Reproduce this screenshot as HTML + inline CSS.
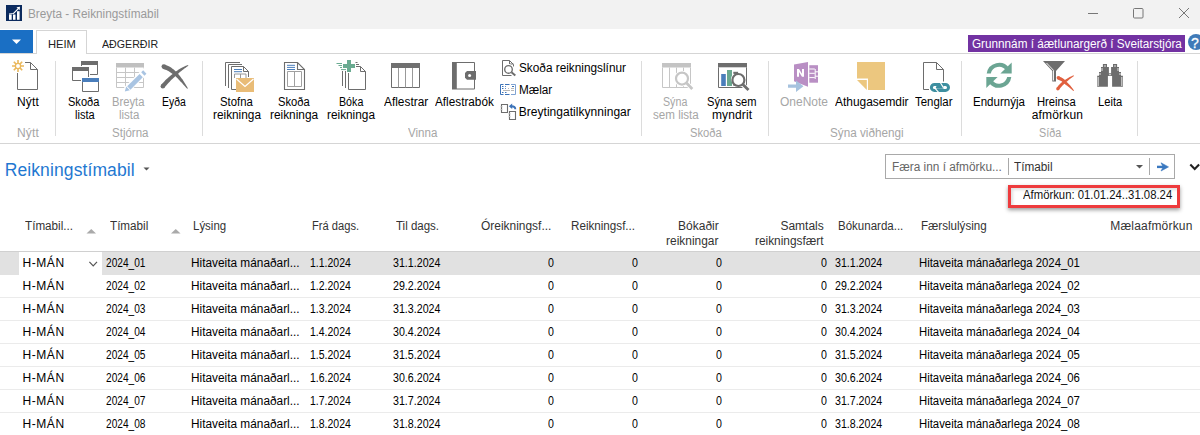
<!DOCTYPE html>
<html><head><meta charset="utf-8"><style>
html,body{margin:0;padding:0;width:1200px;height:435px;overflow:hidden;background:#fff;font-family:"Liberation Sans", sans-serif;}
.t{position:absolute;white-space:nowrap;line-height:14px;}
</style></head><body>
<div style="position:absolute;left:0;top:0;width:1200px;height:29px;background:#f2f2f2"></div>
<div style="position:absolute;left:0;top:30px;width:33px;height:23px;background:#1a6fc4"></div>
<div style="position:absolute;left:36px;top:30px;width:51px;height:24px;border:1px solid #d5d5d5;border-bottom:none;background:#fff;box-sizing:border-box"></div>
<div style="position:absolute;left:0;top:53px;width:36px;height:1px;background:#d5d5d5"></div>
<div style="position:absolute;left:87px;top:53px;width:1113px;height:1px;background:#d5d5d5"></div>
<div style="position:absolute;left:968px;top:35px;width:217px;height:17px;background:#7232a2"></div>
<div style="position:absolute;left:1188px;top:34px;width:16px;height:16px;border-radius:50%;background:#3f7ab8"></div>
<div style="position:absolute;left:0;top:143px;width:1200px;height:1px;background:#d5d5d5"></div>
<div style="position:absolute;left:55px;top:61px;width:1px;height:75px;background:#dcdcdc"></div><div style="position:absolute;left:202px;top:61px;width:1px;height:75px;background:#dcdcdc"></div><div style="position:absolute;left:641px;top:61px;width:1px;height:75px;background:#dcdcdc"></div><div style="position:absolute;left:768px;top:61px;width:1px;height:75px;background:#dcdcdc"></div><div style="position:absolute;left:961px;top:61px;width:1px;height:75px;background:#dcdcdc"></div><div style="position:absolute;left:1137px;top:61px;width:1px;height:75px;background:#dcdcdc"></div>
<div style="position:absolute;left:0;top:251px;width:1200px;height:1px;background:#d0d0d0"></div><div style="position:absolute;left:0;top:274px;width:1200px;height:1px;background:#ebebeb"></div><div style="position:absolute;left:0;top:297px;width:1200px;height:1px;background:#ebebeb"></div><div style="position:absolute;left:0;top:320px;width:1200px;height:1px;background:#ebebeb"></div><div style="position:absolute;left:0;top:343px;width:1200px;height:1px;background:#ebebeb"></div><div style="position:absolute;left:0;top:366px;width:1200px;height:1px;background:#ebebeb"></div><div style="position:absolute;left:0;top:389px;width:1200px;height:1px;background:#ebebeb"></div><div style="position:absolute;left:0;top:412px;width:1200px;height:1px;background:#ebebeb"></div>
<div style="position:absolute;left:0;top:252px;width:1200px;height:23px;background:#e1e1e1"></div>
<div style="position:absolute;left:19px;top:252px;width:83px;height:23px;background:#fff"></div>
<div style="position:absolute;left:885px;top:154px;width:290px;height:25px;border:1px solid #a9a9a9;box-sizing:border-box;background:#fff"></div>
<div style="position:absolute;left:1008px;top:158px;width:1px;height:17px;background:#a9a9a9"></div>
<div style="position:absolute;left:1149px;top:158px;width:1px;height:17px;background:#a9a9a9"></div>
<div style="position:absolute;left:1008px;top:185px;width:172px;height:23px;border:3px solid #ee3b3d;box-sizing:border-box;box-shadow:0px 2px 4px rgba(0,0,0,.4), inset 2px 2px 3px rgba(0,0,0,.12)"></div>
<div class="t" style="left:27.75px;top:7.34px;font-size:12px;color:#9a9a9a;transform:scaleX(0.9814);transform-origin:0 0;">Breyta - Reikningstímabil</div>
<div class="t" style="left:47.50px;top:37.38px;font-size:11.3px;color:#222;transform:scaleX(0.9881);transform-origin:0 0;">HEIM</div>
<div class="t" style="left:102.00px;top:37.38px;font-size:11.3px;color:#222;transform:scaleX(0.9416);transform-origin:0 0;">AÐGERÐIR</div>
<div class="t" style="left:971.50px;top:36.84px;font-size:12px;color:#fff;transform:scaleX(0.9772);transform-origin:0 0;">Grunnnám í áætlunargerð í Sveitarstjóra</div>
<div class="t" style="left:17.00px;top:94.84px;font-size:12px;color:#000;letter-spacing:0.167px;">Nýtt</div>
<div class="t" style="left:68.40px;top:94.84px;font-size:12px;color:#000;transform:scaleX(0.9199);transform-origin:0 0;">Skoða</div>
<div class="t" style="left:74.80px;top:108.34px;font-size:12px;color:#000;transform:scaleX(0.9231);transform-origin:0 0;">lista</div>
<div class="t" style="left:112.00px;top:94.84px;font-size:12px;color:#a6a6a6;transform:scaleX(0.9341);transform-origin:0 0;">Breyta</div>
<div class="t" style="left:118.50px;top:108.34px;font-size:12px;color:#a6a6a6;transform:scaleX(0.9554);transform-origin:0 0;">lista</div>
<div class="t" style="left:162.00px;top:94.84px;font-size:12px;color:#000;transform:scaleX(0.8671);transform-origin:0 0;">Eyða</div>
<div class="t" style="left:220.20px;top:94.84px;font-size:12px;color:#000;transform:scaleX(0.9452);transform-origin:0 0;">Stofna</div>
<div class="t" style="left:213.30px;top:108.34px;font-size:12px;color:#000;transform:scaleX(0.9852);transform-origin:0 0;">reikninga</div>
<div class="t" style="left:277.70px;top:94.84px;font-size:12px;color:#000;transform:scaleX(0.9315);transform-origin:0 0;">Skoða</div>
<div class="t" style="left:270.00px;top:108.34px;font-size:12px;color:#000;transform:scaleX(0.9873);transform-origin:0 0;">reikninga</div>
<div class="t" style="left:338.70px;top:94.84px;font-size:12px;color:#000;transform:scaleX(0.8888);transform-origin:0 0;">Bóka</div>
<div class="t" style="left:327.00px;top:108.34px;font-size:12px;color:#000;transform:scaleX(0.9852);transform-origin:0 0;">reikninga</div>
<div class="t" style="left:384.00px;top:94.84px;font-size:12px;color:#000;transform:scaleX(0.9892);transform-origin:0 0;">Aflestrar</div>
<div class="t" style="left:434.70px;top:94.84px;font-size:12px;color:#000;transform:scaleX(0.9799);transform-origin:0 0;">Aflestrabók</div>
<div class="t" style="left:662.50px;top:94.84px;font-size:12px;color:#a6a6a6;transform:scaleX(0.8888);transform-origin:0 0;">Sýna</div>
<div class="t" style="left:652.60px;top:108.34px;font-size:12px;color:#a6a6a6;transform:scaleX(0.9671);transform-origin:0 0;">sem lista</div>
<div class="t" style="left:706.70px;top:94.84px;font-size:12px;color:#000;transform:scaleX(0.9277);transform-origin:0 0;">Sýna sem</div>
<div class="t" style="left:712.00px;top:108.34px;font-size:12px;color:#000;letter-spacing:0.116px;">myndrit</div>
<div class="t" style="left:779.70px;top:94.84px;font-size:12px;color:#a6a6a6;transform:scaleX(0.9989);transform-origin:0 0;">OneNote</div>
<div class="t" style="left:835.00px;top:94.84px;font-size:12px;color:#000;transform:scaleX(0.9940);transform-origin:0 0;">Athugasemdir</div>
<div class="t" style="left:915.30px;top:94.84px;font-size:12px;color:#000;transform:scaleX(0.9527);transform-origin:0 0;">Tenglar</div>
<div class="t" style="left:973.30px;top:94.84px;font-size:12px;color:#000;transform:scaleX(0.9602);transform-origin:0 0;">Endurnýja</div>
<div class="t" style="left:1037.00px;top:94.84px;font-size:12px;color:#000;transform:scaleX(0.9358);transform-origin:0 0;">Hreinsa</div>
<div class="t" style="left:1031.70px;top:108.34px;font-size:12px;color:#000;letter-spacing:0.179px;">afmörkun</div>
<div class="t" style="left:1097.50px;top:94.84px;font-size:12px;color:#000;transform:scaleX(0.9299);transform-origin:0 0;">Leita</div>
<div class="t" style="left:17.00px;top:125.84px;font-size:12px;color:#a6a6a6;letter-spacing:0.167px;">Nýtt</div>
<div class="t" style="left:111.60px;top:125.84px;font-size:12px;color:#a6a6a6;transform:scaleX(0.9596);transform-origin:0 0;">Stjórna</div>
<div class="t" style="left:408.00px;top:125.84px;font-size:12px;color:#a6a6a6;transform:scaleX(0.9643);transform-origin:0 0;">Vinna</div>
<div class="t" style="left:690.00px;top:125.84px;font-size:12px;color:#a6a6a6;transform:scaleX(0.9315);transform-origin:0 0;">Skoða</div>
<div class="t" style="left:830.00px;top:125.84px;font-size:12px;color:#a6a6a6;transform:scaleX(0.9756);transform-origin:0 0;">Sýna viðhengi</div>
<div class="t" style="left:1039.30px;top:125.84px;font-size:12px;color:#a6a6a6;transform:scaleX(0.8996);transform-origin:0 0;">Síða</div>
<div class="t" style="left:518.75px;top:61.14px;font-size:12px;color:#000;transform:scaleX(0.9836);transform-origin:0 0;">Skoða reikningslínur</div>
<div class="t" style="left:518.75px;top:83.04px;font-size:12px;color:#000;transform:scaleX(0.9778);transform-origin:0 0;">Mælar</div>
<div class="t" style="left:518.75px;top:105.14px;font-size:12px;color:#000;letter-spacing:0.033px;">Breytingatilkynningar</div>
<div class="t" style="left:4.70px;top:162.94px;font-size:17.5px;color:#1f78d1;letter-spacing:0.107px;-webkit-text-stroke:0;">Reikningstímabil</div>
<div class="t" style="left:892.00px;top:159.84px;font-size:12px;color:#666;transform:scaleX(0.9862);transform-origin:0 0;">Færa inn í afmörku...</div>
<div class="t" style="left:1014.40px;top:159.84px;font-size:12px;color:#333;transform:scaleX(0.9800);transform-origin:0 0;">Tímabil</div>
<div class="t" style="left:1023.00px;top:188.04px;font-size:12px;color:#111;transform:scaleX(0.9436);transform-origin:0 0;">Afmörkun: 01.01.24..31.08.24</div>
<div class="t" style="left:25.30px;top:219.34px;font-size:12px;color:#333;transform:scaleX(0.9733);transform-origin:0 0;">Tímabil...</div>
<div class="t" style="left:110.00px;top:219.34px;font-size:12px;color:#333;transform:scaleX(0.9722);transform-origin:0 0;">Tímabil</div>
<div class="t" style="left:193.00px;top:219.34px;font-size:12px;color:#333;transform:scaleX(0.9555);transform-origin:0 0;">Lýsing</div>
<div class="t" style="left:312.00px;top:219.34px;font-size:12px;color:#333;transform:scaleX(0.9284);transform-origin:0 0;">Frá dags.</div>
<div class="t" style="left:396.00px;top:219.34px;font-size:12px;color:#333;transform:scaleX(0.9591);transform-origin:0 0;">Til dags.</div>
<div class="t" style="left:481.25px;top:219.34px;font-size:12px;color:#333;transform:scaleX(0.9949);transform-origin:0 0;">Óreikningsf...</div>
<div class="t" style="left:571.25px;top:219.34px;font-size:12px;color:#333;transform:scaleX(0.9704);transform-origin:0 0;">Reikningsf...</div>
<div class="t" style="left:666.25px;top:233.84px;font-size:12px;color:#333;transform:scaleX(0.9963);transform-origin:0 0;">reikningar</div>
<div class="t" style="left:754.50px;top:233.84px;font-size:12px;color:#333;transform:scaleX(0.9890);transform-origin:0 0;">reikningsfært</div>
<div class="t" style="left:837.50px;top:219.34px;font-size:12px;color:#333;transform:scaleX(0.9600);transform-origin:0 0;">Bókunarda...</div>
<div class="t" style="left:921.25px;top:219.34px;font-size:12px;color:#333;transform:scaleX(0.9652);transform-origin:0 0;">Færslulýsing</div>
<div class="t" style="left:1110.30px;top:219.34px;font-size:12px;color:#333;letter-spacing:0.186px;">Mælaafmörkun</div>
<div class="t" style="left:678.06px;top:219.34px;font-size:12px;color:#333;">Bókaðir</div>
<div class="t" style="left:780.40px;top:219.34px;font-size:12px;color:#333;">Samtals</div>
<div class="t" style="left:22.40px;top:255.84px;font-size:12px;color:#000;letter-spacing:0.584px;">H-MÁN</div>
<div class="t" style="left:106.25px;top:255.84px;font-size:12px;color:#000;transform:scaleX(0.8450);transform-origin:0 0;">2024_01</div>
<div class="t" style="left:190.50px;top:255.84px;font-size:12px;color:#000;transform:scaleX(0.9866);transform-origin:0 0;">Hitaveita mánaðarl...</div>
<div class="t" style="left:309.70px;top:255.84px;font-size:12px;color:#000;transform:scaleX(0.8738);transform-origin:0 0;">1.1.2024</div>
<div class="t" style="left:393.00px;top:255.84px;font-size:12px;color:#000;transform:scaleX(0.8890);transform-origin:0 0;">31.1.2024</div>
<div class="t" style="left:548.00px;top:255.84px;font-size:12px;color:#000;transform:scaleX(0.8857);transform-origin:0 0;">0</div>
<div class="t" style="left:632.20px;top:255.84px;font-size:12px;color:#000;transform:scaleX(0.8857);transform-origin:0 0;">0</div>
<div class="t" style="left:716.00px;top:255.84px;font-size:12px;color:#000;transform:scaleX(0.8857);transform-origin:0 0;">0</div>
<div class="t" style="left:821.20px;top:255.84px;font-size:12px;color:#000;transform:scaleX(0.8857);transform-origin:0 0;">0</div>
<div class="t" style="left:834.50px;top:255.84px;font-size:12px;color:#000;transform:scaleX(0.8844);transform-origin:0 0;">31.1.2024</div>
<div class="t" style="left:918.75px;top:255.84px;font-size:12px;color:#000;transform:scaleX(0.9460);transform-origin:0 0;">Hitaveita mánaðarlega 2024_01</div>
<div class="t" style="left:22.40px;top:278.84px;font-size:12px;color:#000;letter-spacing:0.584px;">H-MÁN</div>
<div class="t" style="left:106.25px;top:278.84px;font-size:12px;color:#000;transform:scaleX(0.8450);transform-origin:0 0;">2024_02</div>
<div class="t" style="left:190.50px;top:278.84px;font-size:12px;color:#000;transform:scaleX(0.9866);transform-origin:0 0;">Hitaveita mánaðarl...</div>
<div class="t" style="left:309.70px;top:278.84px;font-size:12px;color:#000;transform:scaleX(0.8738);transform-origin:0 0;">1.2.2024</div>
<div class="t" style="left:393.00px;top:278.84px;font-size:12px;color:#000;transform:scaleX(0.8890);transform-origin:0 0;">29.2.2024</div>
<div class="t" style="left:548.00px;top:278.84px;font-size:12px;color:#000;transform:scaleX(0.8857);transform-origin:0 0;">0</div>
<div class="t" style="left:632.20px;top:278.84px;font-size:12px;color:#000;transform:scaleX(0.8857);transform-origin:0 0;">0</div>
<div class="t" style="left:716.00px;top:278.84px;font-size:12px;color:#000;transform:scaleX(0.8857);transform-origin:0 0;">0</div>
<div class="t" style="left:821.20px;top:278.84px;font-size:12px;color:#000;transform:scaleX(0.8857);transform-origin:0 0;">0</div>
<div class="t" style="left:834.50px;top:278.84px;font-size:12px;color:#000;transform:scaleX(0.8844);transform-origin:0 0;">29.2.2024</div>
<div class="t" style="left:918.75px;top:278.84px;font-size:12px;color:#000;transform:scaleX(0.9460);transform-origin:0 0;">Hitaveita mánaðarlega 2024_02</div>
<div class="t" style="left:22.40px;top:301.84px;font-size:12px;color:#000;letter-spacing:0.584px;">H-MÁN</div>
<div class="t" style="left:106.25px;top:301.84px;font-size:12px;color:#000;transform:scaleX(0.8450);transform-origin:0 0;">2024_03</div>
<div class="t" style="left:190.50px;top:301.84px;font-size:12px;color:#000;transform:scaleX(0.9866);transform-origin:0 0;">Hitaveita mánaðarl...</div>
<div class="t" style="left:309.70px;top:301.84px;font-size:12px;color:#000;transform:scaleX(0.8738);transform-origin:0 0;">1.3.2024</div>
<div class="t" style="left:393.00px;top:301.84px;font-size:12px;color:#000;transform:scaleX(0.8890);transform-origin:0 0;">31.3.2024</div>
<div class="t" style="left:548.00px;top:301.84px;font-size:12px;color:#000;transform:scaleX(0.8857);transform-origin:0 0;">0</div>
<div class="t" style="left:632.20px;top:301.84px;font-size:12px;color:#000;transform:scaleX(0.8857);transform-origin:0 0;">0</div>
<div class="t" style="left:716.00px;top:301.84px;font-size:12px;color:#000;transform:scaleX(0.8857);transform-origin:0 0;">0</div>
<div class="t" style="left:821.20px;top:301.84px;font-size:12px;color:#000;transform:scaleX(0.8857);transform-origin:0 0;">0</div>
<div class="t" style="left:834.50px;top:301.84px;font-size:12px;color:#000;transform:scaleX(0.8844);transform-origin:0 0;">31.3.2024</div>
<div class="t" style="left:918.75px;top:301.84px;font-size:12px;color:#000;transform:scaleX(0.9460);transform-origin:0 0;">Hitaveita mánaðarlega 2024_03</div>
<div class="t" style="left:22.40px;top:324.84px;font-size:12px;color:#000;letter-spacing:0.584px;">H-MÁN</div>
<div class="t" style="left:106.25px;top:324.84px;font-size:12px;color:#000;transform:scaleX(0.8450);transform-origin:0 0;">2024_04</div>
<div class="t" style="left:190.50px;top:324.84px;font-size:12px;color:#000;transform:scaleX(0.9866);transform-origin:0 0;">Hitaveita mánaðarl...</div>
<div class="t" style="left:309.70px;top:324.84px;font-size:12px;color:#000;transform:scaleX(0.8738);transform-origin:0 0;">1.4.2024</div>
<div class="t" style="left:393.00px;top:324.84px;font-size:12px;color:#000;transform:scaleX(0.8890);transform-origin:0 0;">30.4.2024</div>
<div class="t" style="left:548.00px;top:324.84px;font-size:12px;color:#000;transform:scaleX(0.8857);transform-origin:0 0;">0</div>
<div class="t" style="left:632.20px;top:324.84px;font-size:12px;color:#000;transform:scaleX(0.8857);transform-origin:0 0;">0</div>
<div class="t" style="left:716.00px;top:324.84px;font-size:12px;color:#000;transform:scaleX(0.8857);transform-origin:0 0;">0</div>
<div class="t" style="left:821.20px;top:324.84px;font-size:12px;color:#000;transform:scaleX(0.8857);transform-origin:0 0;">0</div>
<div class="t" style="left:834.50px;top:324.84px;font-size:12px;color:#000;transform:scaleX(0.8844);transform-origin:0 0;">30.4.2024</div>
<div class="t" style="left:918.75px;top:324.84px;font-size:12px;color:#000;transform:scaleX(0.9460);transform-origin:0 0;">Hitaveita mánaðarlega 2024_04</div>
<div class="t" style="left:22.40px;top:347.84px;font-size:12px;color:#000;letter-spacing:0.584px;">H-MÁN</div>
<div class="t" style="left:106.25px;top:347.84px;font-size:12px;color:#000;transform:scaleX(0.8450);transform-origin:0 0;">2024_05</div>
<div class="t" style="left:190.50px;top:347.84px;font-size:12px;color:#000;transform:scaleX(0.9866);transform-origin:0 0;">Hitaveita mánaðarl...</div>
<div class="t" style="left:309.70px;top:347.84px;font-size:12px;color:#000;transform:scaleX(0.8738);transform-origin:0 0;">1.5.2024</div>
<div class="t" style="left:393.00px;top:347.84px;font-size:12px;color:#000;transform:scaleX(0.8890);transform-origin:0 0;">31.5.2024</div>
<div class="t" style="left:548.00px;top:347.84px;font-size:12px;color:#000;transform:scaleX(0.8857);transform-origin:0 0;">0</div>
<div class="t" style="left:632.20px;top:347.84px;font-size:12px;color:#000;transform:scaleX(0.8857);transform-origin:0 0;">0</div>
<div class="t" style="left:716.00px;top:347.84px;font-size:12px;color:#000;transform:scaleX(0.8857);transform-origin:0 0;">0</div>
<div class="t" style="left:821.20px;top:347.84px;font-size:12px;color:#000;transform:scaleX(0.8857);transform-origin:0 0;">0</div>
<div class="t" style="left:834.50px;top:347.84px;font-size:12px;color:#000;transform:scaleX(0.8844);transform-origin:0 0;">31.5.2024</div>
<div class="t" style="left:918.75px;top:347.84px;font-size:12px;color:#000;transform:scaleX(0.9460);transform-origin:0 0;">Hitaveita mánaðarlega 2024_05</div>
<div class="t" style="left:22.40px;top:370.84px;font-size:12px;color:#000;letter-spacing:0.584px;">H-MÁN</div>
<div class="t" style="left:106.25px;top:370.84px;font-size:12px;color:#000;transform:scaleX(0.8450);transform-origin:0 0;">2024_06</div>
<div class="t" style="left:190.50px;top:370.84px;font-size:12px;color:#000;transform:scaleX(0.9866);transform-origin:0 0;">Hitaveita mánaðarl...</div>
<div class="t" style="left:309.70px;top:370.84px;font-size:12px;color:#000;transform:scaleX(0.8738);transform-origin:0 0;">1.6.2024</div>
<div class="t" style="left:393.00px;top:370.84px;font-size:12px;color:#000;transform:scaleX(0.8890);transform-origin:0 0;">30.6.2024</div>
<div class="t" style="left:548.00px;top:370.84px;font-size:12px;color:#000;transform:scaleX(0.8857);transform-origin:0 0;">0</div>
<div class="t" style="left:632.20px;top:370.84px;font-size:12px;color:#000;transform:scaleX(0.8857);transform-origin:0 0;">0</div>
<div class="t" style="left:716.00px;top:370.84px;font-size:12px;color:#000;transform:scaleX(0.8857);transform-origin:0 0;">0</div>
<div class="t" style="left:821.20px;top:370.84px;font-size:12px;color:#000;transform:scaleX(0.8857);transform-origin:0 0;">0</div>
<div class="t" style="left:834.50px;top:370.84px;font-size:12px;color:#000;transform:scaleX(0.8844);transform-origin:0 0;">30.6.2024</div>
<div class="t" style="left:918.75px;top:370.84px;font-size:12px;color:#000;transform:scaleX(0.9460);transform-origin:0 0;">Hitaveita mánaðarlega 2024_06</div>
<div class="t" style="left:22.40px;top:393.84px;font-size:12px;color:#000;letter-spacing:0.584px;">H-MÁN</div>
<div class="t" style="left:106.25px;top:393.84px;font-size:12px;color:#000;transform:scaleX(0.8450);transform-origin:0 0;">2024_07</div>
<div class="t" style="left:190.50px;top:393.84px;font-size:12px;color:#000;transform:scaleX(0.9866);transform-origin:0 0;">Hitaveita mánaðarl...</div>
<div class="t" style="left:309.70px;top:393.84px;font-size:12px;color:#000;transform:scaleX(0.8738);transform-origin:0 0;">1.7.2024</div>
<div class="t" style="left:393.00px;top:393.84px;font-size:12px;color:#000;transform:scaleX(0.8890);transform-origin:0 0;">31.7.2024</div>
<div class="t" style="left:548.00px;top:393.84px;font-size:12px;color:#000;transform:scaleX(0.8857);transform-origin:0 0;">0</div>
<div class="t" style="left:632.20px;top:393.84px;font-size:12px;color:#000;transform:scaleX(0.8857);transform-origin:0 0;">0</div>
<div class="t" style="left:716.00px;top:393.84px;font-size:12px;color:#000;transform:scaleX(0.8857);transform-origin:0 0;">0</div>
<div class="t" style="left:821.20px;top:393.84px;font-size:12px;color:#000;transform:scaleX(0.8857);transform-origin:0 0;">0</div>
<div class="t" style="left:834.50px;top:393.84px;font-size:12px;color:#000;transform:scaleX(0.8844);transform-origin:0 0;">31.7.2024</div>
<div class="t" style="left:918.75px;top:393.84px;font-size:12px;color:#000;transform:scaleX(0.9460);transform-origin:0 0;">Hitaveita mánaðarlega 2024_07</div>
<div class="t" style="left:22.40px;top:416.84px;font-size:12px;color:#000;letter-spacing:0.584px;">H-MÁN</div>
<div class="t" style="left:106.25px;top:416.84px;font-size:12px;color:#000;transform:scaleX(0.8450);transform-origin:0 0;">2024_08</div>
<div class="t" style="left:190.50px;top:416.84px;font-size:12px;color:#000;transform:scaleX(0.9866);transform-origin:0 0;">Hitaveita mánaðarl...</div>
<div class="t" style="left:309.70px;top:416.84px;font-size:12px;color:#000;transform:scaleX(0.8738);transform-origin:0 0;">1.8.2024</div>
<div class="t" style="left:393.00px;top:416.84px;font-size:12px;color:#000;transform:scaleX(0.8890);transform-origin:0 0;">31.8.2024</div>
<div class="t" style="left:548.00px;top:416.84px;font-size:12px;color:#000;transform:scaleX(0.8857);transform-origin:0 0;">0</div>
<div class="t" style="left:632.20px;top:416.84px;font-size:12px;color:#000;transform:scaleX(0.8857);transform-origin:0 0;">0</div>
<div class="t" style="left:716.00px;top:416.84px;font-size:12px;color:#000;transform:scaleX(0.8857);transform-origin:0 0;">0</div>
<div class="t" style="left:821.20px;top:416.84px;font-size:12px;color:#000;transform:scaleX(0.8857);transform-origin:0 0;">0</div>
<div class="t" style="left:834.50px;top:416.84px;font-size:12px;color:#000;transform:scaleX(0.8844);transform-origin:0 0;">31.8.2024</div>
<div class="t" style="left:918.75px;top:416.84px;font-size:12px;color:#000;transform:scaleX(0.9460);transform-origin:0 0;">Hitaveita mánaðarlega 2024_08</div>

<div class="t" style="left:1190px;top:35px;width:10px;height:16px;line-height:16px;text-align:center;font-size:14px;color:#fff;-webkit-text-stroke:0.3px #fff">?</div>
<svg style="position:absolute;left:0;top:0" width="1200" height="435" viewBox="0 0 1200 435">
<rect x="6" y="5" width="16" height="16" fill="#0b2a5e"/><rect x="9" y="14.5" width="2.7" height="5.3" fill="#fff"/><rect x="13" y="14.5" width="2.5" height="5.3" fill="#fff"/><rect x="17" y="11.2" width="2.6" height="8.6" fill="#fff"/><path d="M9 14 L13.5 13.5 L18.5 8.3" stroke="#fff" stroke-width="1.2" fill="none"/><path d="M16.5 7.2 L20 6.8 L19.6 10.3Z" fill="#fff"/><path d="M1088 13.5 H1098" stroke="#777" stroke-width="1"/><rect x="1133.5" y="8.5" width="9.5" height="9.5" rx="1" stroke="#777" fill="none" stroke-width="1"/><path d="M1179 8 L1189 18 M1189 8 L1179 18" stroke="#777" stroke-width="1"/><path d="M12 39.5 H21 L16.5 44Z" fill="#fff"/><path d="M25 62.5 H30.5 L37.5 69.5 V89.5 H17.5 V73" stroke="#6d6d6d" fill="none" stroke-width="1"/><path d="M30.5 62.5 V69.5 H37.5" stroke="#6d6d6d" fill="none" stroke-width="1"/><g stroke="#eab85c" stroke-width="1.6" stroke-linecap="butt"><path d="M18 60 V63.3 M18 68.5 V72 M12 66 H15.3 M20.7 66 H24 M13.8 61.8 L16.1 64.1 M19.9 67.9 L22.2 70.2 M22.2 61.8 L19.9 64.1 M16.1 67.9 L13.8 70.2"/></g><circle cx="18" cy="66" r="2.6" stroke="#eab85c" stroke-width="1.3" fill="none"/><rect x="81" y="61" width="17" height="4" fill="#6d6d6d"/><path d="M97.5 65 V74.5 H90 M81.5 65 V66" stroke="#6d6d6d" fill="none"/><rect x="72" y="67" width="17" height="4" fill="#6d6d6d"/><path d="M72.5 71 V80.5 H81 M88.5 71 V77" stroke="#6d6d6d" fill="none"/><rect x="82" y="78" width="17" height="4" fill="#4a7ebb"/><path d="M82.5 82 V91.5 H98.5 V82" stroke="#6d6d6d" fill="none"/><rect x="116" y="63" width="28" height="4.5" fill="#c0c0c0"/><path d="M116.5 67.5 V87.5 H143.5 V67.5 M125.5 67.5 V87.5 M134.5 67.5 V87.5 M116.5 72.5 H143.5 M116.5 77.5 H143.5 M116.5 82.5 H143.5" stroke="#c6c6c6" fill="none"/><path d="M126.5 90 L146 70.5" stroke="#fff" stroke-width="7"/><path d="M124.8 91.6 L126.2 86.6 L129.8 90.2 Z" fill="#a9c4e2"/><path d="M128.8 88 L141.2 75.6" stroke="#a9c4e2" stroke-width="4.6"/><path d="M142.8 74 L144.8 72" stroke="#a9c4e2" stroke-width="4.6"/><path d="M162.90 68.72 L163.36 68.90 L163.97 69.13 L164.66 69.39 L165.40 69.69 L166.18 70.01 L166.95 70.35 L167.68 70.71 L168.37 71.09 L169.06 71.48 L169.78 71.91 L170.51 72.38 L171.24 72.88 L171.98 73.40 L172.72 73.96 L173.46 74.56 L174.20 75.18 L174.95 75.83 L175.71 76.52 L176.48 77.25 L177.26 78.02 L178.04 78.83 L178.83 79.66 L179.62 80.51 L180.41 81.38 L181.30 82.29 L182.25 83.31 L183.23 84.41 L184.20 85.50 L185.13 86.55 L185.98 87.50 L186.71 88.28 L187.28 88.84 L187.92 88.36 L187.55 87.65 L187.03 86.73 L186.38 85.63 L185.65 84.43 L184.87 83.18 L184.07 81.92 L183.30 80.71 L182.59 79.62 L181.87 78.65 L181.16 77.70 L180.45 76.76 L179.73 75.84 L179.01 74.94 L178.28 74.07 L177.55 73.23 L176.80 72.42 L176.04 71.67 L175.27 70.95 L174.50 70.26 L173.72 69.61 L172.95 68.99 L172.18 68.41 L171.41 67.85 L170.63 67.31 L169.78 66.81 L168.89 66.35 L168.00 65.92 L167.15 65.54 L166.36 65.20 L165.67 64.91 L165.11 64.67 L164.70 64.48Z" fill="#6d6d6d"/><circle cx="163.80" cy="66.60" r="2.30" fill="#6d6d6d"/><path d="M164.45 87.65 L164.79 87.24 L165.21 86.70 L165.70 86.09 L166.26 85.41 L166.87 84.68 L167.52 83.93 L168.20 83.17 L168.91 82.42 L169.67 81.63 L170.52 80.77 L171.43 79.87 L172.38 78.95 L173.34 78.03 L174.30 77.14 L175.22 76.29 L176.09 75.50 L176.89 74.76 L177.67 74.05 L178.43 73.38 L179.17 72.73 L179.91 72.11 L180.65 71.50 L181.40 70.89 L182.17 70.30 L182.96 69.66 L183.84 69.00 L184.75 68.33 L185.66 67.69 L186.52 67.07 L187.29 66.52 L187.93 66.04 L188.40 65.65 L188.00 64.95 L187.43 65.17 L186.69 65.48 L185.82 65.86 L184.85 66.30 L183.83 66.78 L182.80 67.29 L181.78 67.80 L180.83 68.30 L179.97 68.82 L179.12 69.34 L178.27 69.87 L177.43 70.42 L176.58 70.99 L175.71 71.59 L174.82 72.22 L173.91 72.90 L172.96 73.65 L171.96 74.47 L170.93 75.33 L169.89 76.21 L168.87 77.10 L167.88 77.97 L166.95 78.80 L166.09 79.58 L165.29 80.36 L164.51 81.14 L163.78 81.91 L163.10 82.64 L162.49 83.31 L161.95 83.90 L161.50 84.38 L161.15 84.75Z" fill="#6d6d6d"/><circle cx="162.80" cy="86.20" r="2.20" fill="#6d6d6d"/><path d="M225.5 86 V62.5 H240 M228.5 88 V64.5 H242" stroke="#6d6d6d" fill="none"/><path d="M231.5 89.5 V66.5 H243.5 L248.5 71.5 V77 M243.5 66.5 V71.5 H248.5 M231.5 89.5 H236" stroke="#6d6d6d" fill="none"/><path d="M234 69.5 H242 M234 71.7 H242" stroke="#4a7ebb" stroke-width="1"/><path d="M234.5 78 V74 H246 V78 M240.5 74 V78" stroke="#9a9a9a" fill="none"/><rect x="236" y="78" width="18" height="14" fill="#e9bc77"/><path d="M236.5 79 L245 86.5 L253.5 79" stroke="#fff" stroke-width="1.2" fill="none"/><path d="M284.5 62.5 H297.5 L304.5 69.5 V89.5 H284.5 Z M297.5 62.5 V69.5 H304.5" stroke="#6d6d6d" fill="none" stroke-width="1.1"/><path d="M287 65.3 H295 M287 67.4 H295 M287 69.5 H295" stroke="#4a7ebb" stroke-width="1"/><path d="M287.5 71.5 H301.5 V86.5 H287.5 Z M294.5 71.5 V86.5" stroke="#a0a0a0" fill="none"/><path d="M343 64 H355 V68 H343Z M347 60 H351 V72 H347Z" fill="#6aab91"/><path d="M336.5 63.5 H342 M338.5 65.5 H342 M340 67.5 H342 M341 69.6 H346" stroke="#6aab91" stroke-width="1"/><path d="M355.5 62.5 H357.5 M356 64.5 H359" stroke="#6d6d6d" stroke-width="1"/><path d="M356 66.5 H360.5 L365.5 71.5 V89.5 H348.5 V73 M360.5 66.5 V71.5 H365.5" stroke="#6d6d6d" fill="none"/><path d="M342.5 71 V86 M345.5 71 V88" stroke="#6d6d6d" fill="none"/><rect x="391" y="63" width="29" height="5" fill="#707070"/><path d="M391.5 68 V87.5 H419.5 V68" stroke="#6d6d6d" fill="none"/><path d="M398.5 68 V87.5 M405.5 68 V87.5 M412.5 68 V87.5" stroke="#999" fill="none"/><path d="M452 62 H474 Q475 62 475 63 V88.5 Q475 89.5 474 89.5 H452 Z" fill="#6d6d6d"/><rect x="456.8" y="63" width="17.2" height="25.5" fill="#fff"/><path d="M467 71 H476 V79.8 H467 L465 77.8 V73 Z" fill="#6d6d6d"/><circle cx="469.6" cy="75.4" r="1.5" fill="#fff"/><path d="M502.5 75.5 V60.5 H509.5 L513.5 64.5 V66.5 M509.5 60.5 V64 H513.5 M502.5 75.5 H511.5" stroke="#6d6d6d" fill="none" stroke-width="1"/><circle cx="508.5" cy="69.4" r="4" stroke="#fff" stroke-width="3" fill="none"/><circle cx="508.5" cy="69.4" r="3.8" stroke="#6d6d6d" stroke-width="1.4" fill="#fff"/><path d="M511.5 72.3 L515.3 75.5" stroke="#6d6d6d" stroke-width="2"/><path d="M503.5 84.5 H500.5 V94.5 H503.5" stroke="#3b72b8" fill="none" stroke-width="1"/><path d="M505 84.5 H509.5 M505 94.5 H509.5" stroke="#3b72b8" stroke-width="1"/><path d="M511 84.5 H515.5 V94.5 H511" stroke="#7fa3d3" fill="none" stroke-width="1"/><path d="M502 86.5 H503.5 M505 86.5 H505.8 M512 86.5 H514 M502 88.5 H503.5 M505 88.5 H505.8 M502 92.5 H503.5 M505 92.5 H506.5" stroke="#3b72b8" stroke-width="1"/><path d="M503 90.5 H510 M508 88.5 H509 M511 88.5 H514 M511 90.5 H514" stroke="#b8b8b8" stroke-width="1"/><path d="M501.5 104.5 H507.5 V112.5 H501.5 Z M509.5 111.5 H515.5 V119.5 H509.5Z" stroke="#6d6d6d" fill="#fff" stroke-width="1.1"/><path d="M515.3 109.2 C515.3 106.8 514.2 106.3 511.5 106.3" stroke="#3b72b8" stroke-width="1.9" fill="none"/><path d="M508.8 106.3 L512.2 103.6 L512.2 109 Z" fill="#3b72b8"/><path d="M500.5 106.8 H502.5 M500.5 109.6 H502.5 M508.5 113.8 H510.5 M508.5 116.6 H510.5" stroke="#fff" stroke-width="1"/><path d="M500.8 106.8 L501.5 106.2 L502.2 106.8 L501.5 107.4Z M500.8 109.6 L501.5 109 L502.2 109.6 L501.5 110.2Z M508.8 113.8 L509.5 113.2 L510.2 113.8 L509.5 114.4Z M508.8 116.6 L509.5 116 L510.2 116.6 L509.5 117.2Z" stroke="#6d6d6d" stroke-width="0.7" fill="none"/><rect x="662" y="63" width="29" height="4.5" fill="#c4c4c4"/><path d="M662.5 67.5 V87.5 H690.5 V67.5 M669.5 67.5 V87.5 M676.5 67.5 V87.5 M683.5 67.5 V87.5" stroke="#c6c6c6" fill="none"/><circle cx="682" cy="78.6" r="6" stroke="#fff" stroke-width="3.8" fill="#fff"/><path d="M686.3 82.9 L692.6 89.2" stroke="#fff" stroke-width="4.5"/><circle cx="682" cy="78.6" r="6" stroke="#c6c6c6" stroke-width="2.2" fill="#fff"/><path d="M686.5 83.1 L692.3 88.9" stroke="#c6c6c6" stroke-width="2.8"/><rect x="718" y="63" width="29" height="4.3" fill="#6e6e6e"/><path d="M718.5 67.3 V87.5 H746.5 V67.3" stroke="#6d6d6d" fill="none"/><rect x="721.2" y="74" width="4.6" height="12" fill="#4a7ebb"/><rect x="727" y="70" width="5" height="16" fill="#6aa88f"/><rect x="733.3" y="71.8" width="4.8" height="14" fill="#6e6e6e"/><path d="M733 81 A6 6 0 0 1 735 75" stroke="#fff" stroke-width="3.6" fill="none"/><path d="M742.5 84.4 L748.8 90.7" stroke="#fff" stroke-width="4.5"/><circle cx="738.4" cy="80" r="6" stroke="#6d6d6d" stroke-width="2.2" fill="#fff"/><path d="M742.9 84.5 L748.5 90.1" stroke="#6d6d6d" stroke-width="2.8"/><path d="M794 64.5 L808 62 V86.8 L794 81.3 Z" fill="#b98fc4"/><path d="M797 76.8 V69 H799 L802 73.8 V69 H804 V76.8 H802 L799 72 V76.8 Z" fill="#fff"/><rect x="809.3" y="65.2" width="8.7" height="17.5" fill="#b98fc4"/><path d="M809.3 69 H814.8 M809.3 73.3 H814.8 M809.3 77.6 H814.8 M815.2 69 V79 M815.2 71.8 H818 M815.2 76.2 H818" stroke="#fff" stroke-width="1"/><path d="M788 84.6 H796 V80.6 L803.5 86.2 L796 91.9 V87.8 H788 Z" fill="#a6c2de"/><path d="M857 62 H885 V90 H868 V78.6 H857 Z" fill="#ecc77f"/><path d="M857 80 H866.8 V90 Z" fill="#ecc77f"/><path d="M929 89.5 H923.5 V62.5 H936.5 L943.5 69.5 V81.5 M936.5 62.5 V69.5 H943.5" stroke="#6d6d6d" fill="none"/><rect x="931.4" y="84.4" width="17.1" height="6" rx="3" stroke="#3d8fa0" stroke-width="3" fill="none"/><path d="M937.2 87.4 H942.6" stroke="#3d8fa0" stroke-width="2.6" stroke-linecap="round"/><path d="M940.3 82.5 L943.6 87.9 M935.3 88.6 L938.6 92.4" stroke="#fff" stroke-width="1.1"/><path d="M986.7 73.5 A12.4 12.4 0 0 1 1009.2 68.2 L1005.9 70.5 A8.4 8.4 0 0 0 990.8 73.5 Z" fill="#6ba593"/><path d="M1000.4 73.5 H1011.7 V62.6 Z" fill="#6ba593"/><path d="M1011.3 77.1 A12.4 12.4 0 0 1 988.8 82.4 L992.1 80.1 A8.4 8.4 0 0 0 1007.2 77.1 Z" fill="#6ba593"/><path d="M997.6 77.1 H986.3 V88 Z" fill="#6ba593"/><path d="M1043 61 H1065 L1056 71 V81.6 H1052.3 V71 Z" fill="#6d6d6d"/><path d="M1046.5 63 L1053.5 70.3 V80.5" stroke="#fff" stroke-width="0.9" fill="none"/><path d="M1057.55 79.32 L1057.90 79.48 L1058.36 79.69 L1058.88 79.92 L1059.45 80.18 L1060.04 80.46 L1060.61 80.75 L1061.14 81.04 L1061.59 81.31 L1061.99 81.59 L1062.40 81.89 L1062.80 82.22 L1063.22 82.59 L1063.64 82.97 L1064.09 83.38 L1064.56 83.81 L1065.06 84.23 L1065.58 84.64 L1066.11 85.04 L1066.65 85.44 L1067.19 85.85 L1067.73 86.26 L1068.26 86.67 L1068.79 87.09 L1069.30 87.52 L1069.86 87.95 L1070.45 88.45 L1071.06 88.97 L1071.66 89.49 L1072.23 89.98 L1072.75 90.42 L1073.19 90.78 L1073.54 91.04 L1074.06 90.56 L1073.82 90.19 L1073.50 89.72 L1073.10 89.17 L1072.64 88.56 L1072.16 87.93 L1071.66 87.28 L1071.16 86.66 L1070.70 86.08 L1070.23 85.56 L1069.74 85.05 L1069.26 84.55 L1068.77 84.05 L1068.30 83.56 L1067.83 83.09 L1067.37 82.62 L1066.94 82.17 L1066.53 81.74 L1066.12 81.31 L1065.72 80.88 L1065.31 80.44 L1064.88 79.99 L1064.43 79.55 L1063.94 79.11 L1063.41 78.69 L1062.82 78.29 L1062.19 77.91 L1061.54 77.55 L1060.91 77.22 L1060.31 76.92 L1059.79 76.66 L1059.36 76.44 L1059.05 76.28Z" fill="#e0603f"/><circle cx="1058.30" cy="77.80" r="1.70" fill="#e0603f"/><path d="M1059.04 89.81 L1059.28 89.50 L1059.59 89.09 L1059.95 88.62 L1060.35 88.10 L1060.78 87.56 L1061.22 87.02 L1061.66 86.51 L1062.07 86.05 L1062.48 85.61 L1062.92 85.16 L1063.37 84.72 L1063.83 84.28 L1064.31 83.84 L1064.80 83.40 L1065.30 82.96 L1065.81 82.52 L1066.31 82.06 L1066.82 81.60 L1067.35 81.14 L1067.88 80.68 L1068.42 80.23 L1068.95 79.79 L1069.48 79.36 L1070.00 78.95 L1070.52 78.52 L1071.09 78.09 L1071.67 77.65 L1072.25 77.23 L1072.79 76.83 L1073.28 76.47 L1073.68 76.16 L1073.98 75.90 L1073.62 75.30 L1073.26 75.43 L1072.79 75.63 L1072.23 75.87 L1071.61 76.16 L1070.96 76.46 L1070.29 76.79 L1069.63 77.12 L1069.00 77.45 L1068.41 77.79 L1067.80 78.15 L1067.19 78.52 L1066.58 78.91 L1065.97 79.30 L1065.37 79.69 L1064.77 80.09 L1064.19 80.48 L1063.64 80.90 L1063.09 81.31 L1062.54 81.73 L1062.00 82.16 L1061.47 82.59 L1060.95 83.04 L1060.43 83.49 L1059.93 83.95 L1059.42 84.47 L1058.92 85.02 L1058.42 85.58 L1057.95 86.14 L1057.51 86.66 L1057.12 87.13 L1056.81 87.51 L1056.56 87.79Z" fill="#e0603f"/><circle cx="1057.80" cy="88.80" r="1.60" fill="#e0603f"/><path d="M1102.9 64.1 H1107 V67 H1108.9 V86.8 H1097.2 V75.8 H1099 V72.1 H1101 V67 H1102.9Z" fill="#6d6d6d"/><path d="M1117.1 64.1 H1113 V67 H1111.1 V86.8 H1122.9 V75.8 H1121 V72.1 H1119 V67 H1117.1Z" fill="#6d6d6d"/><rect x="1108.5" y="73.3" width="3" height="2.5" fill="#6d6d6d"/><path d="M1109.2 74.5 H1110.8" stroke="#fff" stroke-width="0.8"/><rect x="1107.9" y="76" width="1.2" height="11" fill="#fff"/><rect x="1110.9" y="76" width="1.2" height="11" fill="#fff"/><path d="M1098.2 77 V86 M1100 73 V75 M1102 68 V71 M1121.8 77 V86 M1120 73 V75 M1118 68 V71 M1105 65 V67 M1115 65 V67" stroke="#fff" stroke-width="0.8"/>
<path d="M143.5 167.5 H149.5 L146.5 170.5Z" fill="#555"/>
<path d="M86.5 233.5 H96 L91.25 229Z" fill="#aaa"/>
<path d="M171 233.5 H180.5 L175.75 229Z" fill="#aaa"/>
<path d="M89.4 261.8 L93.2 265.8 L97 261.8" stroke="#555" fill="none" stroke-width="1.2"/>
<path d="M1136 165 H1143 L1139.5 168.5Z" fill="#555"/>
<path d="M1157 166.9 H1165" stroke="#3a78c0" stroke-width="2.4"/><path d="M1161 162.8 L1168.5 166.9 L1161 171 L1163.2 166.9Z" fill="#3a78c0" stroke="#3a78c0" stroke-width="0.6" stroke-linejoin="round"/>
<path d="M1190.3 164.6 L1194.7 169 L1199.1 164.6" stroke="#222" stroke-width="2.1" fill="none"/>
</svg>
</body></html>
